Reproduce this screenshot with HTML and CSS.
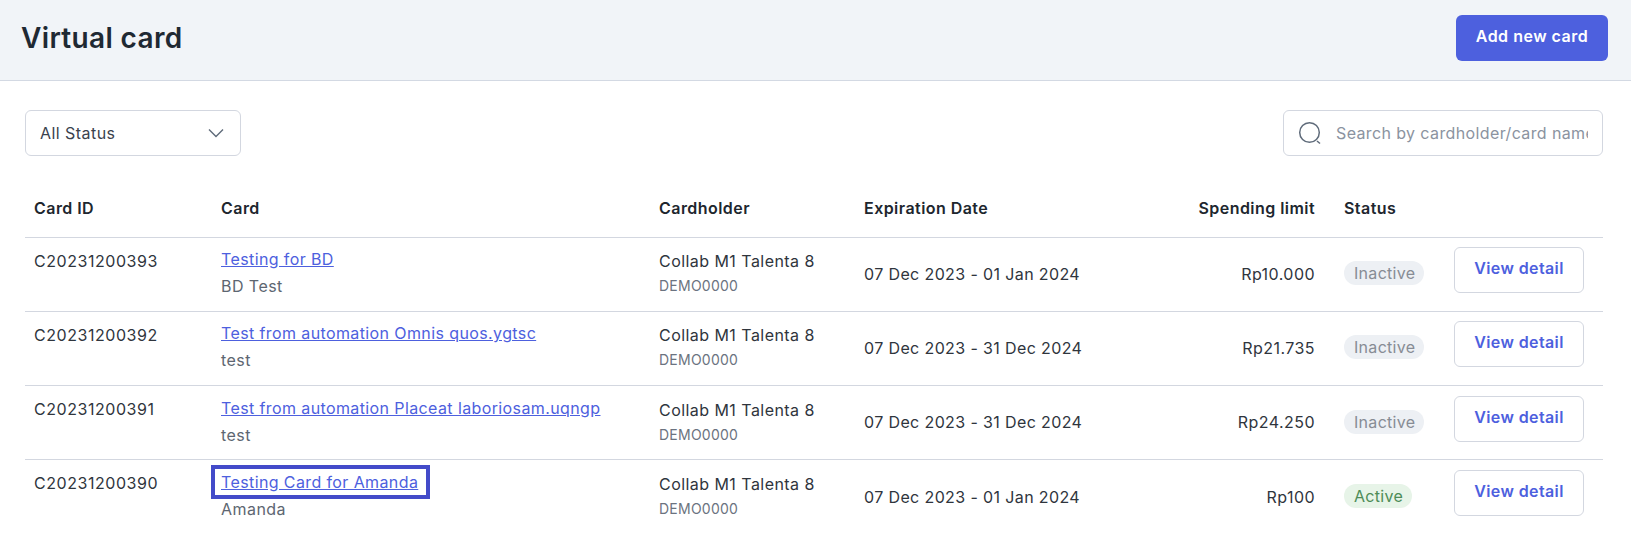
FILE: index.html
```html
<!DOCTYPE html>
<html lang="en">
<head>
<meta charset="utf-8">
<title>Virtual card</title>
<link rel="stylesheet" href="styles.css">
</head>
<body>
<header class="topbar">
  <h1 class="title">Virtual card</h1>
  <button class="btn-primary">Add new card</button>
</header>
<main class="content">
  <div class="filters">
    <div class="select">
      <span>All Status</span>
      <svg class="chevron" viewBox="0 0 18 10" width="18" height="10"><path d="M2 1.5 L9 8.5 L16 1.5" fill="none" stroke="#5f6b7a" stroke-width="1.4"/></svg>
    </div>
    <div class="search">
      <svg class="search-icon" viewBox="0 0 24 24" width="24" height="24"><circle cx="11.5" cy="11.5" r="9.8" fill="none" stroke="#5f6b7a" stroke-width="1.5"/><path d="M19 20 L22 22.5" fill="none" stroke="#5f6b7a" stroke-width="1.5"/></svg>
      <input class="search-input" type="text" placeholder="Search by cardholder/card name">
    </div>
  </div>
  <table class="cards">
    <colgroup>
      <col class="c-id"><col class="c-card"><col class="c-holder"><col class="c-exp"><col class="c-limit"><col class="c-status"><col class="c-action">
    </colgroup>
    <thead>
      <tr><th>Card ID</th><th>Card</th><th>Cardholder</th><th>Expiration Date</th><th class="num">Spending limit</th><th class="st">Status</th><th></th></tr>
    </thead>
    <tbody>
      <tr>
        <td class="top">C20231200393</td>
        <td class="stack"><a class="card-link" href="#">Testing for BD</a><div class="sub">BD Test</div></td>
        <td class="stack"><div class="holder">Collab M1 Talenta 8</div><div class="code">DEMO0000</div></td>
        <td class="date">07 Dec 2023 - 01 Jan 2024</td>
        <td class="num">Rp10.000</td>
        <td class="st"><span class="badge off">Inactive</span></td>
        <td class="action"><button class="btn-outline">View detail</button></td>
      </tr>
      <tr>
        <td class="top">C20231200392</td>
        <td class="stack"><a class="card-link" href="#">Test from automation Omnis quos.ygtsc</a><div class="sub">test</div></td>
        <td class="stack"><div class="holder">Collab M1 Talenta 8</div><div class="code">DEMO0000</div></td>
        <td class="date">07 Dec 2023 - 31 Dec 2024</td>
        <td class="num">Rp21.735</td>
        <td class="st"><span class="badge off">Inactive</span></td>
        <td class="action"><button class="btn-outline">View detail</button></td>
      </tr>
      <tr>
        <td class="top">C20231200391</td>
        <td class="stack"><a class="card-link" href="#">Test from automation Placeat laboriosam.uqngp</a><div class="sub">test</div></td>
        <td class="stack"><div class="holder">Collab M1 Talenta 8</div><div class="code">DEMO0000</div></td>
        <td class="date">07 Dec 2023 - 31 Dec 2024</td>
        <td class="num">Rp24.250</td>
        <td class="st"><span class="badge off">Inactive</span></td>
        <td class="action"><button class="btn-outline">View detail</button></td>
      </tr>
      <tr>
        <td class="top">C20231200390</td>
        <td class="stack"><a class="card-link focused" href="#">Testing Card for Amanda</a><div class="sub">Amanda</div></td>
        <td class="stack"><div class="holder">Collab M1 Talenta 8</div><div class="code">DEMO0000</div></td>
        <td class="date">07 Dec 2023 - 01 Jan 2024</td>
        <td class="num">Rp100</td>
        <td class="st"><span class="badge on">Active</span></td>
        <td class="action"><button class="btn-outline">View detail</button></td>
      </tr>
    </tbody>
  </table>
</main>
</body>
</html>
```
FILE: styles.css
```css
* { box-sizing: border-box; }
html, body { margin: 0; padding: 0; height: 533px; overflow: hidden; }
body { font-family: Inter, "Liberation Sans", sans-serif; font-size: 16px; letter-spacing: .45px; color: #2a2f36; background: #fff; }
.topbar { height: 81px; background: #f1f4f8; border-bottom: 1px solid #d3d9e3; display: flex; align-items: center; justify-content: space-between; padding: 0 23px 4px 21px; }
.title { margin: 0; font-size: 28px; font-weight: 600; line-height: 36px; letter-spacing: .35px; color: #1f2933; }
.btn-primary { width: 152px; height: 46px; margin-top: -1px; border: 0; border-radius: 6px; background: #4d60de; color: #fff; font: 600 16px Inter, sans-serif; letter-spacing: .5px; padding: 0 0 4px; }
.content { padding: 29px 28px 0 25px; }
.filters { display: flex; justify-content: space-between; }
.select { width: 216px; height: 46px; border: 1px solid #d3d7e0; border-radius: 6px; display: flex; align-items: center; justify-content: space-between; padding: 0 15px 0 14px; letter-spacing: .45px; color: #3a424d; }
.search { width: 320px; height: 46px; border: 1px solid #d3d7e0; border-radius: 6px; display: flex; align-items: center; padding: 0 14px 0 14px; gap: 14px; }
.search-icon { flex: none; }
.search-input { flex: 1; min-width: 0; border: 0; outline: 0; padding: 0; font: 400 16px Inter, sans-serif; letter-spacing: .38px; color: #2a2f36; background: transparent; }
.search-input::placeholder { color: #8b93a0; opacity: 1; }
.cards { width: 1578px; table-layout: fixed; border-collapse: collapse; margin-top: 20px; }
.c-id { width: 187px; } .c-card { width: 438px; } .c-holder { width: 205px; } .c-exp { width: 300px; } .c-limit { width: 169px; } .c-status { width: 121px; } .c-action { width: 158px; }
th { height: 61px; padding: 4px 9px 0; text-align: left; font-weight: 600; color: #20262e; border-bottom: 1px solid #d3d7e0; }
td { height: 74.33px; padding: 0 9px; border-bottom: 1px solid #d3d7e0; vertical-align: middle; color: #2f353d; }
tbody tr:last-child td { border-bottom: 0; }
td.top { vertical-align: top; padding-top: 13px; letter-spacing: .55px; }
td.stack { padding-bottom: 3px; }
td.date { letter-spacing: .38px; padding-bottom: 1px; }
td.num { padding-bottom: 1px; }
td.action { vertical-align: top; padding-top: 9.5px; }
.num { text-align: right; }
th.st, td.st { padding-left: 20px; padding-bottom: 2px; }
th.st { padding-bottom: 0; }
.card-link { color: #4d60de; text-decoration: underline; letter-spacing: .39px; }
.card-link.focused { outline: 4px solid #434bc9; outline-offset: 3px; padding: 0 5px 0 3px; margin: 0 -5px 0 -3px; }
.sub { margin-top: 7px; color: #5d6671; }
.code { margin-top: 6px; font-size: 14px; line-height: 17px; color: #6b7380; letter-spacing: .25px; }
.badge { display: inline-block; height: 24px; line-height: 24px; padding: 0 9px 0 10px; border-radius: 12px; letter-spacing: .3px; }
.badge.off { background: #edf0f4; color: #878c94; }
.badge.on { background: #e7f4e8; color: #4d8c57; }
.btn-outline { width: 130px; height: 46px; background: #fff; border: 1px solid #d3d7e0; border-radius: 6px; color: #4d60de; font: 600 16px Inter, sans-serif; letter-spacing: .38px; padding: 0 0 4px; }
```
